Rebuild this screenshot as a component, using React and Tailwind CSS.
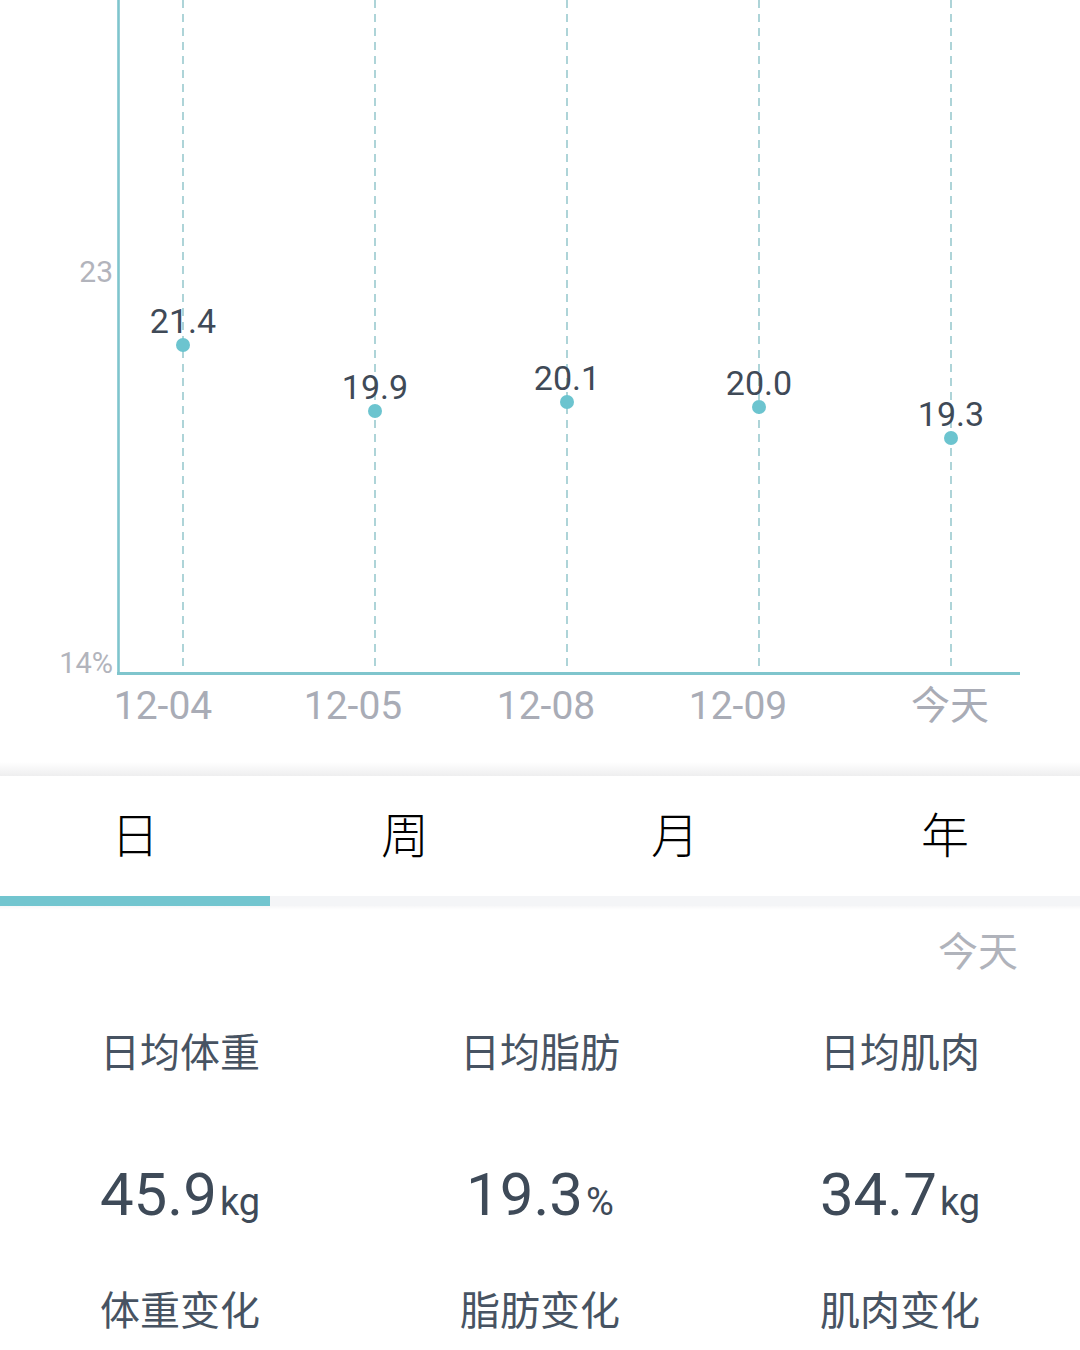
import React from "react";

const cjk = { fontFamily: "'Noto Sans CJK SC', sans-serif" };
const roboto = "Roboto, 'Noto Sans CJK SC', sans-serif";

const points = [
  { x: 183, y: 345, v: "21.4" },
  { x: 375, y: 411, v: "19.9" },
  { x: 567, y: 402, v: "20.1" },
  { x: 759, y: 407, v: "20.0" },
  { x: 951, y: 438, v: "19.3" },
];

const xLabels = [
  { x: 163, t: "12-04" },
  { x: 353, t: "12-05" },
  { x: 546, t: "12-08" },
  { x: 738, t: "12-09" },
  { x: 950, t: "今天" },
];

function Chart() {
  return (
    <svg width="1080" height="762" viewBox="0 0 1080 762" className="block">
      {points.map((p) => (
        <line
          key={"d" + p.x}
          x1={p.x}
          y1={0}
          x2={p.x}
          y2={668}
          stroke="#8cc2c8"
          strokeWidth="1.4"
          strokeDasharray="8 6"
        />
      ))}
      <line x1="118.5" y1="0" x2="118.5" y2="675" stroke="#7fc5cd" strokeWidth="2.6" />
      <line x1="117" y1="673.5" x2="1020" y2="673.5" stroke="#7fc5cd" strokeWidth="3" />
      <text x="113" y="282" textAnchor="end" fontFamily={roboto} fontSize="30" fill="#b2b4bc">
        23
      </text>
      <text x="113" y="673" textAnchor="end" fontFamily={roboto} fontSize="29" fill="#b2b4bc">
        14%
      </text>
      {points.map((p) => (
        <g key={"p" + p.x}>
          <text
            x={p.x}
            y={p.y - 12}
            textAnchor="middle"
            fontFamily={roboto}
            fontSize="34"
            fill="#3f4a57"
          >
            {p.v}
          </text>
          <circle cx={p.x} cy={p.y} r="7" fill="#6cc4cf" />
        </g>
      ))}
      {xLabels.map((l) => (
        <text
          key={l.t}
          x={l.x}
          y={719}
          textAnchor="middle"
          fontFamily={l.t === "今天" ? "'Noto Sans CJK SC', sans-serif" : roboto}
          fontSize="39"
          fill="#a9acb6"
        >
          {l.t}
        </text>
      ))}
    </svg>
  );
}

function Stat({ label, value, unit, change }) {
  return (
    <div className="flex flex-col items-center">
      <div className="text-[40px] leading-none text-[#475362]" style={cjk}>
        {label}
      </div>
      <div
        className="mt-[95px] flex items-baseline leading-none text-[#3e4a58]"
        style={{ fontFamily: "Roboto, sans-serif" }}
      >
        <span className="text-[60px] leading-none">{value}</span>
        <span className="ml-[3px] text-[38px] leading-none">{unit}</span>
      </div>
      <div className="mt-[63px] text-[40px] leading-none text-[#475362]" style={cjk}>
        {change}
      </div>
    </div>
  );
}

export default function App() {
  return (
    <div className="h-[1350px] w-[1080px] overflow-hidden bg-white">
      <Chart />
      <div className="h-[14px] bg-gradient-to-b from-white to-[#eeeeef]" />
      <div className="flex h-[120px] bg-white pb-[8px]">
        {["日", "周", "月", "年"].map((t) => (
          <div key={t} className="flex flex-1 items-center justify-center">
            <span className="text-[48px] font-light leading-none text-[#000000]" style={cjk}>
              {t}
            </span>
          </div>
        ))}
      </div>
      <div className="flex h-[10px]">
        <div className="w-[270px] bg-[#72c5cf]" />
        <div className="flex-1 bg-[#f4f5f7]" />
      </div>
      <div className="h-[4px] bg-gradient-to-b from-[#f7f7f8] to-white" />
      <div className="mt-[19px] flex justify-end pr-[62px]">
        <span className="text-[40px] leading-none text-[#b0b3bb]" style={cjk}>
          今天
        </span>
      </div>
      <div className="mt-[61px] grid grid-cols-3">
        <Stat label="日均体重" value="45.9" unit="kg" change="体重变化" />
        <Stat label="日均脂肪" value="19.3" unit="%" change="脂肪变化" />
        <Stat label="日均肌肉" value="34.7" unit="kg" change="肌肉变化" />
      </div>
    </div>
  );
}
